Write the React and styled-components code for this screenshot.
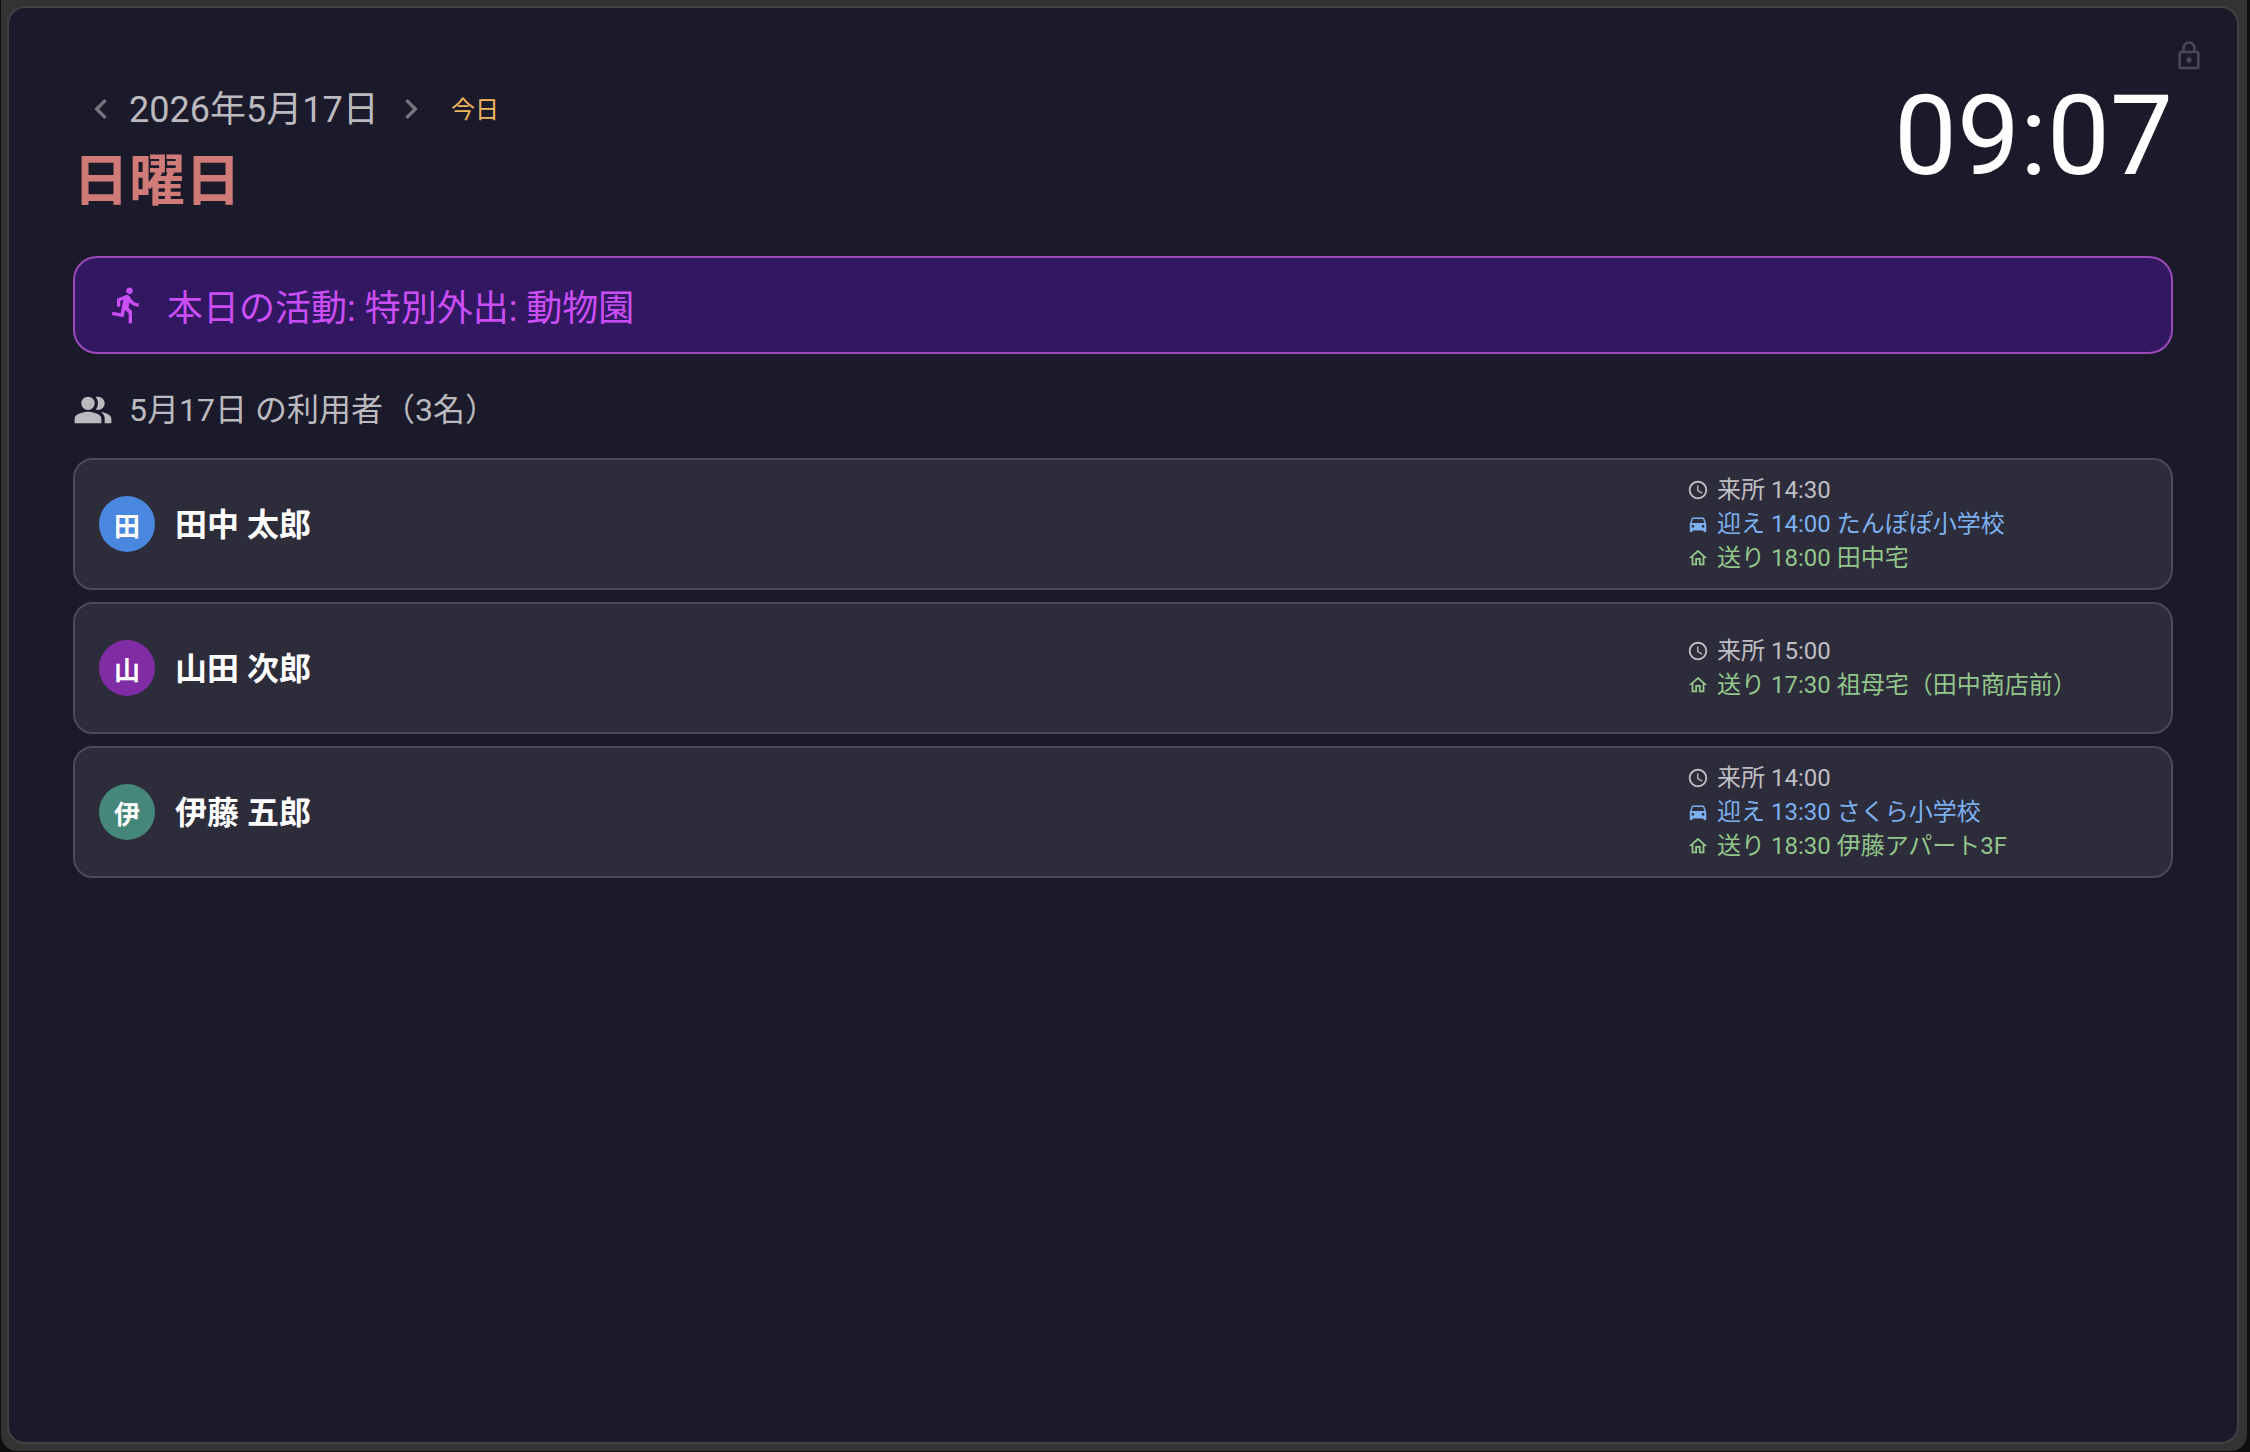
import React from 'react'
import styled, { createGlobalStyle } from 'styled-components'
import {
  MdAccessTime,
  MdChevronLeft,
  MdChevronRight,
  MdDirectionsCar,
  MdDirectionsRun,
  MdLockOutline,
  MdOutlineHome,
  MdPeopleAlt
} from 'react-icons/md'

const GlobalStyle = createGlobalStyle`
  * {
    box-sizing: border-box;
  }

  body {
    margin: 0;
    background: #0e0e0e;
    color: #fff;
    font-family: Roboto, 'Noto Sans CJK JP', sans-serif;
  }

  button {
    display: flex;
    align-items: center;
    background: none;
    border: none;
    color: inherit;
    font: inherit;
    cursor: pointer;
  }

  svg {
    display: block;
    flex: none;
  }
`

const Frame = styled.div`
  display: flex;
  min-height: calc(100vh - 1px);
  margin: 0 3px 1px 1px;
  padding: 6px 8px 7px 6px;
  background: #333;
  border-radius: 0 0 16px 16px;
`

const Board = styled.main`
  position: relative;
  flex: 1;
  padding: 64px;
  background: #1b1a2b;
  border: 2px solid #414141;
  border-radius: 18px;
`

const LockButton = styled.button`
  position: absolute;
  top: 16px;
  right: 16px;
  padding: 16px;
  color: #494856;
`

const Header = styled.header`
  display: flex;
  justify-content: space-between;
  align-items: flex-start;
  margin-bottom: 40px;
`

const DateRow = styled.div`
  display: flex;
  align-items: center;
  height: 74px;
`

const ArrowButton = styled.button`
  padding: 8px;
  color: #77767f;
`

const DateText = styled.span`
  min-width: 254px;
  padding-top: 2px;
  font-size: 36px;
  line-height: 56px;
  color: #bbbabf;
`

const TodayButton = styled.button`
  padding: 10px 12px 8px;
  color: #f2b65c;
  font-size: 24px;
  line-height: 32px;
`

const Weekday = styled.h1`
  margin: 0;
  font-size: 56px;
  line-height: 70px;
  font-weight: 700;
  color: #d17b78;
`

const Clock = styled.time`
  font-size: 112px;
  line-height: 128px;
`

const Activity = styled.section`
  display: flex;
  align-items: center;
  gap: 20px;
  height: 98px;
  padding: 0 32px;
  background: #311861;
  border: 2px solid #9c4ab8;
  border-radius: 24px;
  color: #cb4ef5;
  font-size: 36px;
`

const ListTitle = styled.h2`
  display: flex;
  align-items: center;
  gap: 16px;
  margin: 32px 0 24px;
  font-size: 32px;
  line-height: 48px;
  font-weight: 400;
  color: #bbbabf;
`

const List = styled.ul`
  display: flex;
  flex-direction: column;
  gap: 12px;
  margin: 0;
  padding: 0;
  list-style: none;
`

const Card = styled.li`
  display: flex;
  align-items: center;
  gap: 20px;
  min-height: 132px;
  padding: 12px 24px;
  background: #2d2c3b;
  border: 2px solid #4b4a57;
  border-radius: 20px;
`

const Avatar = styled.span`
  display: flex;
  align-items: center;
  justify-content: center;
  width: 56px;
  height: 56px;
  border-radius: 50%;
  background: ${props => props.$color};
  font-size: 26px;
  font-weight: 700;
`

const Name = styled.span`
  flex: 1;
  padding-bottom: 4px;
  font-size: 32px;
  font-weight: 700;
`

const Schedule = styled.div`
  flex: 0 0 460px;
`

const Entry = styled.div`
  display: flex;
  align-items: center;
  gap: 8px;
  font-size: 24px;
  line-height: 34px;
  color: ${props => props.$color};
`

const kinds = {
  arrive: { label: '来所', color: '#bfbec3', Icon: MdAccessTime },
  pickup: { label: '迎え', color: '#7cb0f0', Icon: MdDirectionsCar },
  dropoff: { label: '送り', color: '#92c68a', Icon: MdOutlineHome }
}

const users = [
  {
    name: '田中 太郎',
    color: '#4a87de',
    entries: [
      { kind: 'arrive', time: '14:30' },
      { kind: 'pickup', time: '14:00', place: 'たんぽぽ小学校' },
      { kind: 'dropoff', time: '18:00', place: '田中宅' }
    ]
  },
  {
    name: '山田 次郎',
    color: '#802da5',
    entries: [
      { kind: 'arrive', time: '15:00' },
      { kind: 'dropoff', time: '17:30', place: '祖母宅（田中商店前）' }
    ]
  },
  {
    name: '伊藤 五郎',
    color: '#45877a',
    entries: [
      { kind: 'arrive', time: '14:00' },
      { kind: 'pickup', time: '13:30', place: 'さくら小学校' },
      { kind: 'dropoff', time: '18:30', place: '伊藤アパート3F' }
    ]
  }
]

const ScheduleEntry = ({ kind, time, place }) => {
  const { label, color, Icon } = kinds[kind]

  return (
    <Entry $color={color}>
      <Icon size="22" />
      <span>{[label, time, place].filter(Boolean).join(' ')}</span>
    </Entry>
  )
}

const UserCard = ({ user }) => (
  <Card>
    <Avatar $color={user.color}>{user.name[0]}</Avatar>
    <Name>{user.name}</Name>
    <Schedule>
      {user.entries.map(entry => <ScheduleEntry key={entry.kind} {...entry} />)}
    </Schedule>
  </Card>
)

const App = () => {
  return (
    <>
      <GlobalStyle />
      <Frame>
        <Board lang="ja">
          <LockButton aria-label="ロック"><MdLockOutline size="32" /></LockButton>
          <Header>
            <div>
              <DateRow>
                <ArrowButton aria-label="前の日"><MdChevronLeft size="40" /></ArrowButton>
                <DateText>2026年5月17日</DateText>
                <ArrowButton aria-label="次の日"><MdChevronRight size="40" /></ArrowButton>
                <TodayButton>今日</TodayButton>
              </DateRow>
              <Weekday>日曜日</Weekday>
            </div>
            <Clock>09:07</Clock>
          </Header>
          <Activity>
            <MdDirectionsRun size="40" />
            <span>本日の活動: 特別外出: 動物園</span>
          </Activity>
          <ListTitle>
            <MdPeopleAlt size="40" />
            <span>5月17日 の利用者（{users.length}名）</span>
          </ListTitle>
          <List>
            {users.map(user => <UserCard key={user.name} user={user} />)}
          </List>
        </Board>
      </Frame>
    </>
  )
}

export default App
